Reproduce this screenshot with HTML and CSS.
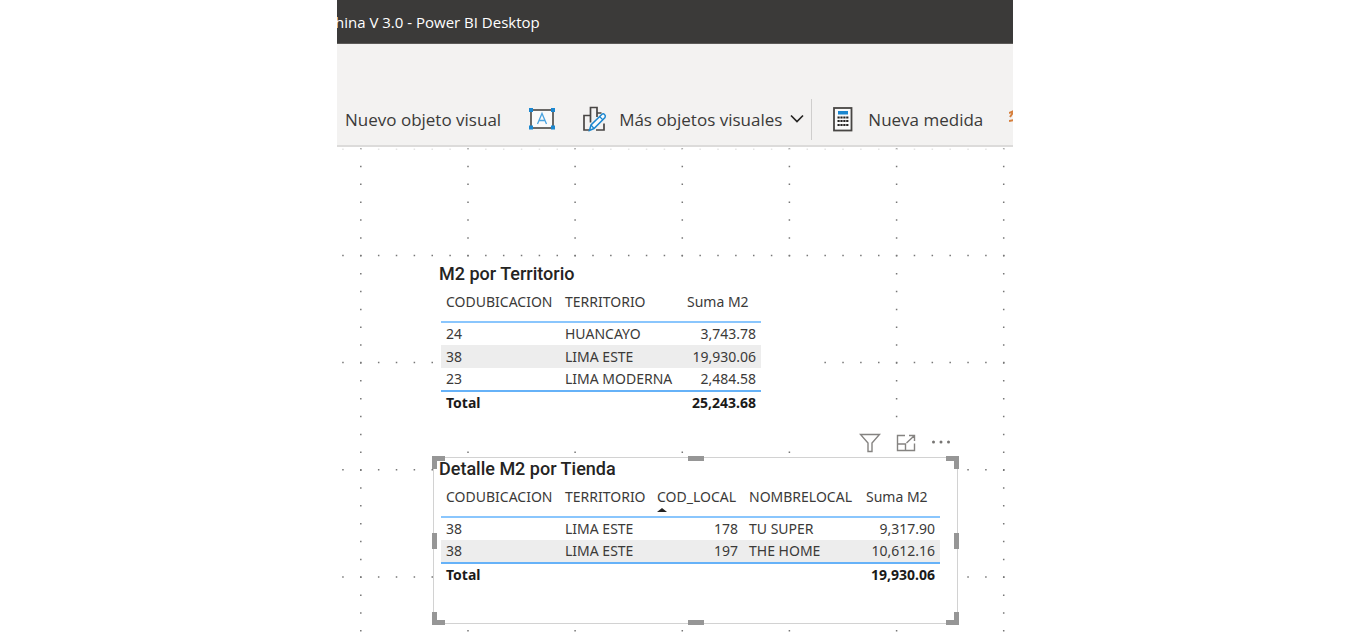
FILE: index.html
```html
<!DOCTYPE html>
<html lang="es">
<head>
<meta charset="utf-8">
<title>Power BI Desktop</title>
<link rel="stylesheet" href="styles.css">
</head>
<body>
<div class="app">
  <header class="titlebar"><span>hina V 3.0 - Power BI Desktop</span></header>
  <nav class="ribbon">
    <button class="cmd cmd-visual" type="button">Nuevo objeto visual</button>
    <button class="cmd cmd-text" type="button" aria-label="Cuadro de texto">
      <svg width="28" height="24" viewBox="0 0 28 24" fill="none">
        <rect x="3" y="3" width="22" height="18" fill="#fafafa" stroke="#484644" stroke-width="1.6"/>
        <path d="M9.5 17 L14 6.5 L18.500 17 M11 13.500H17" stroke="#4aa3e0" stroke-width="1.3"/>
        <path d="M1 1h4v4h-4z M23 1h4v4h-4z M1 18.500h4v4h-4z M23 18.500h4v4h-4z" fill="#1b87d0"/>
      </svg>
    </button>
    <button class="cmd cmd-more" type="button">
      <svg width="26" height="26" viewBox="0 0 26 26" fill="none">
        <path d="M7.500 24H2V9.500H8.500V1.500H15V7H19.500M8.500 9.500V16.500M15 7V11M22 17.500V24H14" stroke="#484644" stroke-width="1.700"/>
        <path d="M7.500 24.500L9 19L20 8.300C21.500 7 24.300 9 23 11.500L12 22.500Z" fill="#f8fbfd" stroke="#1b87d0" stroke-width="1.500"/>
        <path d="M9 19L12 22.500M17.500 10.500L20.800 13.700" stroke="#1b87d0" stroke-width="1.200"/>
      </svg>
      <span>Más objetos visuales</span>
      <svg width="14" height="10" viewBox="0 0 14 10" fill="none"><path d="M1 1.500L7 7.500L13 1.500" stroke="#252423" stroke-width="1.700"/></svg>
    </button>
    <span class="divider"></span>
    <button class="cmd cmd-measure" type="button">
      <svg width="20" height="25" viewBox="0 0 20 25">
        <rect x="1" y="1" width="17.500" height="22.500" fill="#fafafa" stroke="#484644" stroke-width="1.800"/>
        <rect x="5" y="4" width="10" height="3.500" fill="#1b87d0"/>
        <path d="M4.500 10.500H15.500M4.500 14H15.500M4.500 18H15.500" stroke="#252423" stroke-width="2.200" stroke-dasharray="2.200 0.700"/>
      </svg>
      <span>Nueva medida</span>
    </button>
    <span class="clipped"><svg width="14" height="14" viewBox="0 0 14 14" fill="none"><path d="M0 3L5 1L1 7M0 11L6 10" stroke="#d67f3c" stroke-width="2"/></svg></span>
  </nav>
  <main class="canvas">
    <svg class="grid" width="100%" height="100%" aria-hidden="true">
      <g stroke="#777" stroke-width="1.500" stroke-dasharray="1.500 16.360">
        <path d="M23.800 0.900V1200M131 0.900V1200M238.100 0.900V1200M345.300 0.900V1200M452.400 0.900V1200M559.600 0.900V1200M666.700 0.900V1200M773.900 0.900V1200"/>
        <path d="M5.200 108.500H2400M5.200 215.600H2400M5.200 322.800H2400M5.200 429.900H2400"/>
      </g>
      <path d="M5.200 2.200H2400" stroke="#e4e4e4" stroke-width="1.500" stroke-dasharray="1.500 16.360"/>
    </svg>

    <section class="visual visual-territory">
      <h2>M2 por Territorio</h2>
      <table>
        <colgroup><col class="c-code"><col class="c-wide"><col class="c-sum"></colgroup>
        <thead><tr><th>CODUBICACION</th><th>TERRITORIO</th><th>Suma M2</th></tr></thead>
        <tbody>
          <tr><td>24</td><td>HUANCAYO</td><td class="num">3,743.78</td></tr>
          <tr><td>38</td><td>LIMA ESTE</td><td class="num">19,930.06</td></tr>
          <tr><td>23</td><td>LIMA MODERNA</td><td class="num">2,484.58</td></tr>
        </tbody>
        <tfoot><tr><td>Total</td><td></td><td class="num">25,243.68</td></tr></tfoot>
      </table>
    </section>

    <div class="actions">
      <button type="button" aria-label="Filtros"><svg width="22" height="20" viewBox="0 0 22 20" fill="none"><path d="M1.500 1.500H20.500L13 10V18.500H9V10Z" stroke="#858381" stroke-width="1.400"/></svg></button>
      <button type="button" aria-label="Modo de enfoque"><svg width="20" height="18" viewBox="0 0 20 18" fill="none"><path d="M9 1.500H1.500V16.500H18.500V9.500M1.500 10H9.500V16.500M13 1.500H18.500V7M18.500 1.500L10.500 9" stroke="#858381" stroke-width="1.400"/></svg></button>
      <button type="button" aria-label="Más opciones"><svg width="20" height="18" viewBox="0 0 20 18" fill="#777573"><circle cx="2.500" cy="8" r="1.500"/><circle cx="10" cy="8" r="1.500"/><circle cx="17.500" cy="8" r="1.500"/></svg></button>
    </div>

    <section class="visual visual-store">
      <h2>Detalle M2 por Tienda</h2>
      <table>
        <colgroup><col class="c-code"><col class="c-mid"><col class="c-mid"><col class="c-name"><col class="c-sum"></colgroup>
        <thead><tr><th>CODUBICACION</th><th>TERRITORIO</th><th class="sorted">COD_LOCAL</th><th>NOMBRELOCAL</th><th>Suma M2</th></tr></thead>
        <tbody>
          <tr><td>38</td><td>LIMA ESTE</td><td class="num">178</td><td>TU SUPER</td><td class="num">9,317.90</td></tr>
          <tr><td>38</td><td>LIMA ESTE</td><td class="num">197</td><td>THE HOME</td><td class="num">10,612.16</td></tr>
        </tbody>
        <tfoot><tr><td>Total</td><td></td><td></td><td></td><td class="num">19,930.06</td></tr></tfoot>
      </table>
      <i class="corner nw"></i><i class="corner ne"></i><i class="corner sw"></i><i class="corner se"></i>
      <i class="edge n"></i><i class="edge s"></i><i class="edge w"></i><i class="edge e"></i>
    </section>
  </main>
</div>
</body>
</html>
```
FILE: styles.css
```css
* { box-sizing: border-box; }
body {
  margin: 0;
  background: #fff;
  color: #3b3a39;
  font-family: "Noto Sans", "Open Sans", sans-serif;
}
button {
  padding: 0;
  border: 0;
  background: none;
  color: inherit;
  font: inherit;
}
svg { display: block; flex: none; }

.app {
  display: flex;
  flex-direction: column;
  min-height: 100vh;
  margin: 0 337px;
  overflow: hidden;
}
.titlebar {
  display: flex;
  align-items: center;
  height: 44px;
  background: #3b3a39;
  border-bottom: 1px solid #5c5a58;
  color: #fff;
  font: 15px/20px "Open Sans", sans-serif;
  text-indent: -2px;
  white-space: nowrap;
}
.ribbon {
  display: flex;
  align-items: flex-end;
  height: 103px;
  padding: 0 0 5px 8px;
  overflow: hidden;
  background: #f3f2f1;
  border-bottom: 2px solid #dcdbda;
  font: 17px "Open Sans", sans-serif;
  white-space: nowrap;
}
.cmd {
  display: flex;
  flex: none;
  align-items: center;
  height: 42px;
}
.cmd-text { margin-left: 27px; }
.cmd-more { margin-left: 26px; gap: 8px; }
.cmd-more span { margin-left: 3px; }
.divider {
  flex: none;
  width: 1px;
  height: 41px;
  margin: 0 21px 0 7px;
  background: #cfcecd;
}
.cmd-measure { gap: 15px; }
.clipped {
  flex: none;
  margin: 0 0 16px 26px;
}

.canvas {
  position: relative;
  flex: 1;
  overflow: hidden;
}
.grid {
  position: absolute;
  inset: 0;
}
.visual {
  position: absolute;
  background: #fff;
}
.visual-territory {
  left: 97px;
  top: 116px;
  width: 387px;
  padding: 0 7px 30px;
}
.visual-store {
  left: 96px;
  top: 310px;
  width: 525px;
  height: 167px;
  padding: 0 7px;
  border: 1px solid #d2d2d2;
}
h2 {
  margin: 0 0 0 -2px;
  color: #252423;
  font: 500 18px/21px Roboto, sans-serif;
}
table {
  border-collapse: collapse;
  table-layout: fixed;
  width: 0;
  font-size: 14px;
  line-height: 20px;
  white-space: nowrap;
}
.c-code { width: 118px; }
.c-wide { width: 122px; }
.c-mid { width: 92px; }
.c-name { width: 117px; }
.c-sum { width: 80px; }
th, td {
  height: 23px;
  padding: 0 5px;
  text-align: left;
  font-weight: 400;
}
th {
  height: 38px;
  padding-bottom: 2px;
  border-bottom: 2px solid #8ac6fd;
}
th + th, td + td { padding-left: 6px; }
th + th, td + td:not(.num) { padding-right: 0; }
td.num { text-align: right; }
tbody tr:nth-child(even) { background: #ededed; }
tfoot tr { border-top: 2px solid #66b2f8; }
tfoot td {
  color: #1b1a19;
  font-weight: 700;
}
.sorted { position: relative; }
.sorted::after {
  content: "";
  position: absolute;
  left: 6px;
  bottom: 4px;
  border: 5px solid transparent;
  border-top: 0;
  border-bottom: 4px solid #252423;
}

.actions {
  position: absolute;
  left: 519px;
  top: 285px;
  display: flex;
  gap: 15px;
  align-items: center;
  padding: 1px 6px 4px 3px;
  background: #fff;
}

.corner {
  position: absolute;
  width: 13px;
  height: 13px;
  border: 0 solid #969696;
}
.nw { left: -2px; top: -2px; border-width: 5px 0 0 5px; }
.ne { right: -2px; top: -2px; border-width: 5px 5px 0 0; }
.sw { left: -2px; bottom: -2px; border-width: 0 0 5px 5px; }
.se { right: -2px; bottom: -2px; border-width: 0 5px 5px 0; }
.edge {
  position: absolute;
  background: #969696;
}
.n, .s { left: 254px; width: 16px; height: 5px; }
.w, .e { top: 75px; width: 5px; height: 16px; }
.n { top: -2px; }
.s { bottom: -2px; }
.w { left: -2px; }
.e { right: -2px; }
```
